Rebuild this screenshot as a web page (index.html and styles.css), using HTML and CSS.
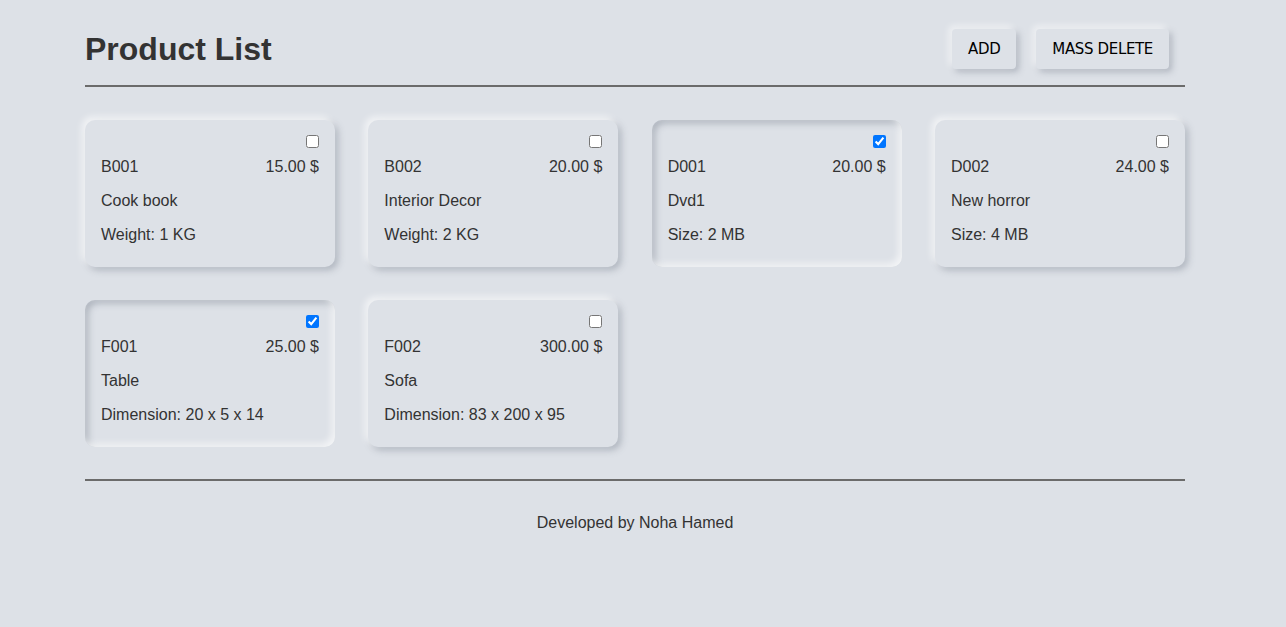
FILE: index.html
```html
<!DOCTYPE html>
<html lang="en">
<head>
<meta charset="utf-8">
<title>Product List</title>
<link rel="stylesheet" href="styles.css">
</head>
<body>
<div class="page">
  <header class="header">
    <h1 class="title">Product List</h1>
    <div class="actions">
      <button class="btn">ADD</button>
      <button class="btn">MASS DELETE</button>
    </div>
  </header>
  <main class="grid">
    <div class="card">
      <div class="check-row"><input type="checkbox" class="check"></div>
      <div class="row"><span>B001</span><span>15.00 $</span></div>
      <p class="line">Cook book</p>
      <p class="line">Weight: 1 KG</p>
    </div>
    <div class="card">
      <div class="check-row"><input type="checkbox" class="check"></div>
      <div class="row"><span>B002</span><span>20.00 $</span></div>
      <p class="line">Interior Decor</p>
      <p class="line">Weight: 2 KG</p>
    </div>
    <div class="card card-checked">
      <div class="check-row"><input type="checkbox" class="check" checked></div>
      <div class="row"><span>D001</span><span>20.00 $</span></div>
      <p class="line">Dvd1</p>
      <p class="line">Size: 2 MB</p>
    </div>
    <div class="card">
      <div class="check-row"><input type="checkbox" class="check"></div>
      <div class="row"><span>D002</span><span>24.00 $</span></div>
      <p class="line">New horror</p>
      <p class="line">Size: 4 MB</p>
    </div>
    <div class="card card-checked">
      <div class="check-row"><input type="checkbox" class="check" checked></div>
      <div class="row"><span>F001</span><span>25.00 $</span></div>
      <p class="line">Table</p>
      <p class="line">Dimension: 20 x 5 x 14</p>
    </div>
    <div class="card">
      <div class="check-row"><input type="checkbox" class="check"></div>
      <div class="row"><span>F002</span><span>300.00 $</span></div>
      <p class="line">Sofa</p>
      <p class="line">Dimension: 83 x 200 x 95</p>
    </div>
  </main>
  <footer class="footer">Developed by Noha Hamed</footer>
</div>
</body>
</html>
```

FILE: styles.css
```css
html, body {
  margin: 0;
  padding: 0;
  background: #dde1e7;
}
body {
  font-family: "Liberation Sans", Arial, sans-serif;
  color: #333;
  font-size: 16px;
}
.page {
  width: 1100px;
  margin-left: 85px;
}
.header {
  display: flex;
  justify-content: space-between;
  align-items: center;
  padding: 28px 16px 16px 0;
  height: 41px;
  border-bottom: 2px solid #6b6b6b;
}
.title {
  margin: 0;
  font-size: 32px;
  font-weight: bold;
  color: #333;
  line-height: 40px;
}
.actions {
  display: flex;
  gap: 20px;
  align-self: flex-start;
  margin-top: 1px;
}
.btn {
  font-family: "DejaVu Sans", Verdana, sans-serif;
  font-size: 15px;
  letter-spacing: -0.35px;
  color: #000;
  background: #dde1e7;
  border: none;
  border-radius: 4px;
  height: 40px;
  padding: 0 16px;
  box-shadow: -3px -3px 7px rgba(255,255,255,0.6), 3px 3px 6px rgba(94,104,121,0.35);
}
.grid {
  display: grid;
  grid-template-columns: repeat(4, 250px);
  justify-content: space-between;
  row-gap: 33px;
  padding: 33px 0 32px;
  border-bottom: 2px solid #6b6b6b;
}
.card {
  background: #dde1e7;
  border-radius: 10px;
  padding: 15px 16px 23px;
  box-shadow: -3px -3px 7px rgba(255,255,255,0.7), 3px 3px 7px rgba(94,104,121,0.38);
}
.card-checked {
  box-shadow: inset -3px -3px 7px rgba(255,255,255,0.75), inset 3px 3px 7px rgba(94,104,121,0.4);
}
.check-row {
  display: flex;
  justify-content: flex-end;
  height: 13px;
}
.check {
  margin: 0;
  width: 13px;
  height: 13px;
}
.row {
  display: flex;
  justify-content: space-between;
  line-height: 18px;
  margin-top: 10px;
}
.line {
  margin: 16px 0 0;
  line-height: 18px;
}
.footer {
  text-align: center;
  padding-top: 33px;
  line-height: 18px;
}
```
